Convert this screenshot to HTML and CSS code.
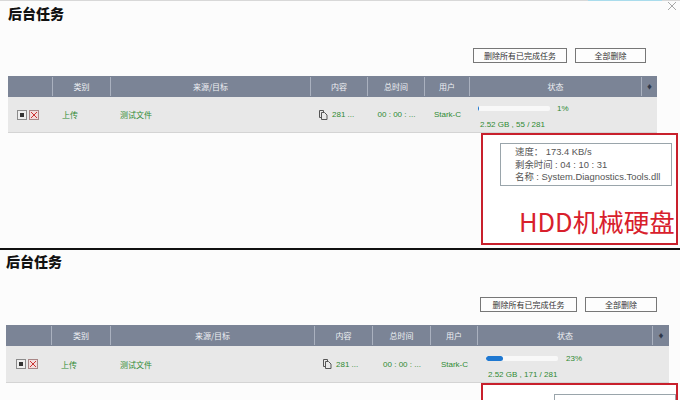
FILE: index.html
```html
<!DOCTYPE html>
<html lang="zh">
<head>
<meta charset="utf-8">
<title>后台任务</title>
<link rel="stylesheet" href="styles.css">
</head>
<body>
<section class="panel panel-a">
  <div class="topstrip"><span class="blue"></span></div>
  <svg class="close" width="10" height="10" viewBox="0 0 10 10"><path d="M1 1l8 8M9 1l-8 8" stroke="#a8a8a8" stroke-width="1" fill="none"/></svg>
  <h1>后台任务</h1>
  <div class="actions">
    <button class="btn btn-long">删除所有已完成任务</button>
    <button class="btn btn-short">全部删除</button>
  </div>
  <div class="table">
    <div class="head">
      <span></span><span>类别</span><span>来源/目标</span><span>内容</span><span>总时间</span><span>用户</span><span>状态</span><span class="plus">♦</span>
    </div>
    <div class="row">
      <span class="ctrl">
        <i class="ico stop"><b></b></i>
        <svg class="ico-x" width="10" height="10" viewBox="0 0 10 10"><rect x=".5" y=".5" width="9" height="9" fill="#f3dcdc" stroke="#a98686"/><path d="M2 2l6 6M8 2l-6 6" stroke="#c33" fill="none"/></svg>
      </span>
      <span class="left">上传</span>
      <span class="left">测试文件</span>
      <span class="content"><svg width="9" height="10" viewBox="0 0 9 10"><path d="M.5.5h4v2M2.5 2.5h3l2.500 2.500v4.500h-5.500z M.5.5v7h2" fill="none" stroke="#555"/></svg>281 ...</span>
      <span>00 : 00 : ...</span>
      <span>Stark-C</span>
      <span class="status">
        <span class="progress"><span class="track"><em class="fill f1"></em></span><small>1%</small></span>
        <span class="sub">2.52 GB , 55 / 281</span>
      </span>
      <span></span>
    </div>
  </div>
  <div class="mark">
    <div class="tip">
      <p>速度： 173.4 KB/s</p>
      <p>剩余时间 : 04 : 10 : 31</p>
      <p>名称 : System.Diagnostics.Tools.dll</p>
    </div>
    <div class="hdd">HDD机械硬盘</div>
  </div>
</section>
<section class="panel panel-b">
  <h1>后台任务</h1>
  <div class="actions">
    <button class="btn btn-long">删除所有已完成任务</button>
    <button class="btn btn-short">全部删除</button>
  </div>
  <div class="table">
    <div class="head">
      <span></span><span>类别</span><span>来源/目标</span><span>内容</span><span>总时间</span><span>用户</span><span>状态</span><span class="plus">♦</span>
    </div>
    <div class="row">
      <span class="ctrl">
        <i class="ico stop"><b></b></i>
        <svg class="ico-x" width="10" height="10" viewBox="0 0 10 10"><rect x=".5" y=".5" width="9" height="9" fill="#f3dcdc" stroke="#a98686"/><path d="M2 2l6 6M8 2l-6 6" stroke="#c33" fill="none"/></svg>
      </span>
      <span class="left">上传</span>
      <span class="left">测试文件</span>
      <span class="content"><svg width="9" height="10" viewBox="0 0 9 10"><path d="M.5.5h4v2M2.5 2.5h3l2.500 2.500v4.500h-5.500z M.5.5v7h2" fill="none" stroke="#555"/></svg>281 ...</span>
      <span>00 : 00 : ...</span>
      <span>Stark-C</span>
      <span class="status">
        <span class="progress"><span class="track"><em class="fill f23"></em></span><small>23%</small></span>
        <span class="sub">2.52 GB , 171 / 281</span>
      </span>
      <span></span>
    </div>
  </div>
  <div class="mark">
    <div class="tip"></div>
  </div>
</section>
</body>
</html>
```
FILE: styles.css
```css
* { box-sizing: border-box; }
html, body { margin: 0; padding: 0; }
body {
  width: 680px;
  height: 400px;
  overflow: hidden;
  background: #fcfcfc;
  font-family: "Liberation Sans", "Noto Sans CJK SC", sans-serif;
}
.panel { position: relative; }
.panel-a { height: 248px; padding: 0 23px 0 8px; }
.panel-b {
  height: 152px;
  overflow: hidden;
  border-top: 2px solid #111;
  padding: 0 11px 0 6px;
}
.topstrip {
  position: absolute;
  left: 0;
  right: 0;
  top: 0;
  height: 1px;
  background: #d8d8d8;
}
.blue {
  position: absolute;
  left: 588px;
  top: 0;
  width: 74px;
  height: 1px;
  background: #a9dcec;
}
.close { position: absolute; left: 667px; top: 1px; }
h1 {
  margin: 0;
  font-size: 14px;
  line-height: 18px;
  font-weight: 900;
  color: #111;
  font-family: "Noto Sans CJK SC", sans-serif;
}
.panel-a h1 { padding-top: 4px; height: 48px; }
.panel-b h1 { padding-top: 2px; height: 47px; }
.actions { display: flex; justify-content: flex-end; gap: 8px; }
.panel-a .actions { height: 28px; padding-right: 11px; }
.panel-b .actions { height: 28px; padding-right: 12px; }
.btn {
  height: 15px;
  padding: 0;
  background: #fdfdfd;
  border: 1px solid #777;
  font-family: "Noto Sans CJK SC", sans-serif;
  font-size: 8px;
  line-height: 13px;
  color: #333;
}
.panel-a .btn-long { width: 94px; }
.panel-a .btn-short { width: 71px; }
.panel-b .btn-long { width: 97px; }
.panel-b .btn-short { width: 72px; }
.table { font-size: 8px; }
.head, .row { display: grid; }
.panel-a .head, .panel-a .row { grid-template-columns: 45px 58px 200px 57px 57px 45px 172px 15px; }
.panel-b .head, .panel-b .row { grid-template-columns: 46px 59px 204px 58px 58px 47px 175px 16px; }
.head {
  height: 21px;
  background: #7b8496;
  color: #eef0f4;
  font-family: "Noto Sans CJK SC", sans-serif;
}
.head span {
  display: flex;
  align-items: center;
  justify-content: center;
  border-right: 1px solid #aab1bf;
  margin: 1px 0;
}
.head span:last-child { border-right: 0; }
.plus { font-size: 6px; color: #30384a; }
.row {
  background: #e8e8e8;
  color: #2f8a33;
  border-bottom: 1px solid #d4d4d4;
}
.panel-a .row { height: 36px; }
.panel-b .row { height: 37px; }
.row > span {
  display: flex;
  align-items: center;
  justify-content: center;
}
.row > .left { justify-content: flex-start; padding-left: 9px; font-family: "Noto Sans CJK SC", sans-serif; }
.row > .ctrl { gap: 2px; justify-content: flex-start; padding-left: 9px; }
.panel-b .row > .ctrl { padding-left: 10px; }
.ico {
  display: flex;
  align-items: center;
  justify-content: center;
  width: 10px;
  height: 10px;
  border: 1px solid #8b8b8b;
  background: #eee;
}
.ico b { width: 4px; height: 4px; background: #333; }
.row > .content { gap: 4px; justify-content: flex-start; padding-left: 8px; white-space: nowrap; }
.row > .status { display: block; padding: 7px 0 0 8px; }
.panel-b .row > .status { padding-top: 8px; }
.progress { display: flex; align-items: center; height: 9px; }
.track {
  display: block;
  width: 72px;
  height: 5px;
  background: #f8f8f8;
  border-radius: 2px;
  overflow: hidden;
}
.fill { display: block; height: 100%; background: #1f78d1; }
.f1 { width: 1px; }
.f23 { width: 17px; border-radius: 3px; }
.progress small { font-size: 8px; margin-left: 7px; }
.panel-b .progress small { margin-left: 8px; }
.sub { display: block; margin-top: 7px; padding-left: 2px; white-space: nowrap; line-height: 10px; }
.mark {
  position: absolute;
  left: 481px;
  border: 2px solid #c8202c;
  background: #fff;
}
.panel-a .mark { top: 133px; width: 197px; height: 112px; }
.panel-b .mark { top: 133px; width: 197px; height: 17px; border-bottom: 0; }
.tip {
  position: absolute;
  background: #fff;
  border: 1px solid #9aa5ab;
  font-size: 9.400px;
  line-height: 12.500px;
  color: #555;
}
.panel-a .tip { left: 17px; top: 8px; width: 172px; height: 43px; padding: 2px 0 0 14px; }
.panel-b .tip { left: 71px; top: 9px; width: 122px; height: 6px; border-bottom: 0; }
.tip p { margin: 0; white-space: nowrap; }
.hdd {
  position: absolute;
  left: 36px;
  top: 70px;
  font-family: "Noto Sans CJK SC", sans-serif;
  font-size: 25.500px;
  line-height: 32px;
  color: #d8202c;
  white-space: nowrap;
}
```
